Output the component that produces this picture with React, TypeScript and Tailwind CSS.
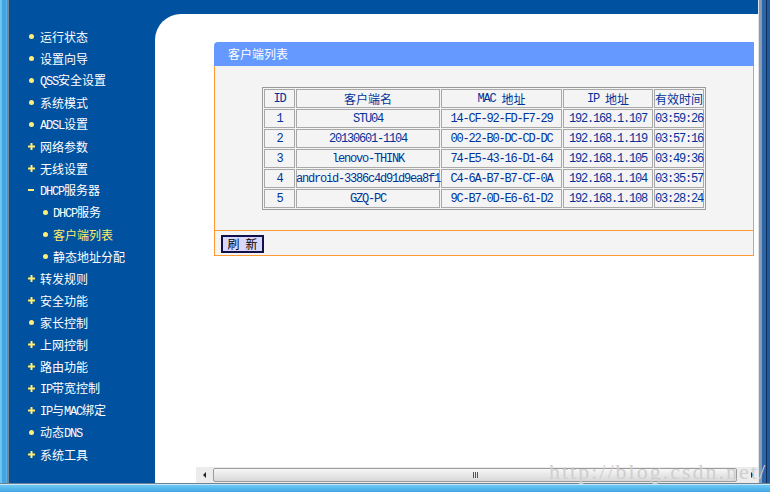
import React from "react";

type Item = { t: string; b: "dot" | "plus" | "minus"; sub?: boolean; active?: boolean };

const items: Item[] = [
  { t: "运行状态", b: "dot" },
  { t: "设置向导", b: "dot" },
  { t: "QSS安全设置", b: "dot" },
  { t: "系统模式", b: "dot" },
  { t: "ADSL设置", b: "dot" },
  { t: "网络参数", b: "plus" },
  { t: "无线设置", b: "plus" },
  { t: "DHCP服务器", b: "minus" },
  { t: "DHCP服务", b: "dot", sub: true },
  { t: "客户端列表", b: "dot", sub: true, active: true },
  { t: "静态地址分配", b: "dot", sub: true },
  { t: "转发规则", b: "plus" },
  { t: "安全功能", b: "plus" },
  { t: "家长控制", b: "dot" },
  { t: "上网控制", b: "plus" },
  { t: "路由功能", b: "plus" },
  { t: "IP带宽控制", b: "plus" },
  { t: "IP与MAC绑定", b: "plus" },
  { t: "动态DNS", b: "dot" },
  { t: "系统工具", b: "plus" },
];

const rows = [
  ["1", "STU04", "14-CF-92-FD-F7-29", "192.168.1.107", "03:59:26"],
  ["2", "20130601-1104", "00-22-B0-DC-CD-DC", "192.168.1.119", "03:57:16"],
  ["3", "lenovo-THINK", "74-E5-43-16-D1-64", "192.168.1.105", "03:49:36"],
  ["4", "android-3386c4d91d9ea8f1", "C4-6A-B7-B7-CF-0A", "192.168.1.104", "03:35:57"],
  ["5", "GZQ-PC", "9C-B7-0D-E6-61-D2", "192.168.1.108", "03:28:24"],
];

function Mixed({ text }: { text: string }) {
  const parts = text.split(/([\x20-\x7E]+)/).filter(Boolean);
  return (
    <>
      {parts.map((p, i) =>
        /^[\x20-\x7E]+$/.test(p) ? (
          <span key={i} className="font-['Liberation_Mono',monospace] text-[12px] tracking-[-1.2px] whitespace-pre">
            {p}
          </span>
        ) : (
          <span key={i} className="font-['Noto_Sans_CJK_SC',sans-serif] text-[12px]">
            {p}
          </span>
        )
      )}
    </>
  );
}

function Bullet({ b }: { b: Item["b"] }) {
  if (b === "dot") return <span className="block w-[5px] h-[5px] rounded-full bg-[#ffee77]" />;
  if (b === "minus") return <span className="block w-[6px] h-[2px] bg-[#ffee77]" />;
  return (
    <svg width="7" height="7" viewBox="0 0 7 7" className="block">
      <rect x="0" y="2.5" width="7" height="2" fill="#ffee77" />
      <rect x="2.5" y="0" width="2" height="7" fill="#ffee77" />
    </svg>
  );
}

export default function App() {
  const headers = ["ID", "客户端名", "MAC 地址", "IP 地址", "有效时间"];
  const widths = ["w-[31px]", "w-[144px]", "w-[121px]", "w-[90px]", "w-[50px]"];
  return (
    <div className="relative w-[770px] h-[492px] overflow-hidden flex flex-col bg-white">
      <div className="flex flex-1 min-h-0">
        {/* left window frame */}
        <div className="flex w-[9px] shrink-0">
          <div className="w-[2px] bg-[#6ec4f0]" />
          <div className="w-[4px] bg-[#42a4e0]" />
          <div className="w-[1px] bg-[#5ab4ea]" />
          <div className="w-[2px] bg-[#76879a]" />
        </div>

        {/* main area */}
        <div className="flex flex-1 bg-[#0051a0] min-w-0">
          {/* sidebar */}
          <div className="w-[146px] shrink-0 pt-[25px] text-white">
            {items.map((it) => (
              <div
                key={it.t}
                className={`flex items-center h-[22px] leading-[14px] ${it.sub ? "pl-[32px]" : "pl-[18px]"} ${
                  it.active ? "text-[#ffee66]" : "text-white"
                }`}
              >
                <span className={`w-[8px] h-[8px] flex items-center justify-center ${it.sub ? "mr-[4px]" : "mr-[5px]"}`}>
                  <Bullet b={it.b} />
                </span>
                <span className="whitespace-nowrap">
                  <Mixed text={it.t} />
                </span>
              </div>
            ))}
          </div>

          {/* content */}
          <div className="flex-1 mt-[14px] bg-white rounded-tl-[26px] flex flex-col min-w-0">
            <div className="mt-[28px] ml-[59px] mr-[4px]">
              <div className="h-[24px] bg-[#6699ff] rounded-tl-[4px] flex items-center pl-[14px] text-white font-['Noto_Sans_CJK_SC',sans-serif] text-[12px] leading-none">
                客户端列表
              </div>
              <div className="bg-[#f4f4f4] border-x border-b border-[#ff9933]">
                <div className="pt-[21px] pb-[20px] pl-[47px]">
                  <table className="border-separate border-spacing-[1px] border border-[#9a9a9a] table-fixed w-[444px] text-[#003399]">
                    <thead>
                      <tr>
                        {headers.map((h, i) => (
                          <th key={h} className={`${widths[i]} h-[19px] p-0 border border-[#a8a8a8] font-normal`}>
                            <div className="h-[17px] flex items-center justify-center whitespace-nowrap leading-none overflow-visible">
                              <Mixed text={h} />
                            </div>
                          </th>
                        ))}
                      </tr>
                    </thead>
                    <tbody>
                      {rows.map((r) => (
                        <tr key={r[0]}>
                          {r.map((c, i) => (
                            <td key={i} className="h-[19px] p-0 border border-[#a8a8a8]">
                              <div className="h-[17px] flex items-center justify-center whitespace-nowrap leading-none font-['Liberation_Mono',monospace] text-[12px] tracking-[-1.2px]">
                                {c}
                              </div>
                            </td>
                          ))}
                        </tr>
                      ))}
                    </tbody>
                  </table>
                </div>
                <div className="border-t border-[#ff9933] pt-[4px] pb-[2px] pl-[6px]">
                  <button className="w-[43px] h-[18px] bg-[#d8d8ff] border-2 border-[#10104a] flex items-center justify-center gap-[6px] text-black font-['Noto_Sans_CJK_SC',sans-serif] text-[12px] leading-none">
                    <span>刷</span>
                    <span>新</span>
                  </button>
                </div>
              </div>
            </div>

            <div className="flex-1" />

            {/* horizontal scrollbar */}
            <div className="ml-[41px] h-[16px] bg-[#ececec] flex items-center">
              <div className="w-[17px] flex items-center justify-center">
                <span className="block w-0 h-0 border-y-[3px] border-y-transparent border-r-[3px] border-r-[#222]" />
              </div>
              <div className="w-[524px] h-[14px] rounded-[2px] border border-[#9c9c9c] bg-gradient-to-b from-[#f7f7f7] to-[#d8d8d8] flex items-center justify-center gap-[1px]">
                <span className="block w-[1px] h-[6px] bg-[#555]" />
                <span className="block w-[1px] h-[6px] bg-[#555]" />
                <span className="block w-[1px] h-[6px] bg-[#555]" />
              </div>
              <div className="flex-1 flex justify-end pr-[4px]">
                <span className="block w-0 h-0 border-y-[3px] border-y-transparent border-l-[3px] border-l-[#222]" />
              </div>
            </div>
          </div>
        </div>

        {/* right window frame */}
        <div className="flex w-[12px] shrink-0">
          <div className="w-[1px] bg-[#dde3ea]" />
          <div className="w-[3px] bg-[#8a9bb0]" />
          <div className="w-[4px] bg-[#2c64aa]" />
          <div className="w-[1px] bg-[#0e2f5c]" />
          <div className="w-[3px] bg-[#2459a0]" />
        </div>
      </div>

      {/* bottom window frame */}
      <div className="h-[9px] shrink-0 flex flex-col">
        <div className="h-[1px] bg-[#6f8396]" />
        <div className="h-[1px] bg-[#c8e6f8]" />
        <div className="flex-1 bg-gradient-to-b from-[#6cc8f2] to-[#40a8e6]" />
      </div>

      {/* watermark */}
      <div className="absolute left-[549px] top-[461px] font-['Liberation_Serif',serif] text-[22px] leading-none tracking-[2px] text-[#cfcfcf] whitespace-nowrap pointer-events-none">
        http://blog.csdn.net/
      </div>
    </div>
  );
}
